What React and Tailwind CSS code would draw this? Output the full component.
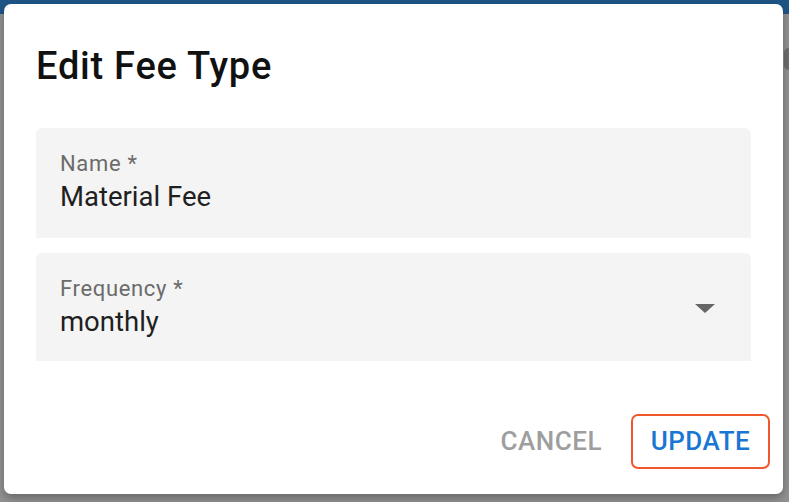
import React from 'react';

const font = { fontFamily: 'Roboto, "Liberation Sans", sans-serif' };

const FilledField = ({ label, value, select = false, height }) => (
  <div className={`relative ${height} rounded-t-[6px] bg-[#f4f4f4] pl-[24px] pt-[24px]`}>
    <div className="text-[22px] leading-[24px] tracking-[0.03em] text-[#6b6b6b]">{label}</div>
    <div className="mt-[5px] text-[27.5px] leading-[32px] text-[#1f1f1f]">{value}</div>
    {select && (
      <svg className="absolute right-[34px] top-[48px] h-[14px] w-[24px]" viewBox="0 0 24 14">
        <path d="M2 3 L22 3 L12 12 Z" fill="#666" />
      </svg>
    )}
  </div>
);

export default function App() {
  return (
    <div className="relative h-[502px] w-[789px] overflow-hidden bg-[#929292]" style={font}>
      {/* app bar behind the overlay */}
      <div className="absolute left-0 right-0 top-0 h-[14px] bg-[#1e5586]" />
      <div className="absolute right-0 top-[48px] h-[22px] w-[5px] rounded-l-full bg-[#6e6e6e]" />

      <div className="relative ml-[4px] mt-[4px] flex h-[490px] w-[779px] flex-col rounded-[7px] bg-white px-[32px] shadow-[0_4px_10px_rgba(0,0,0,0.3)]">
        <h1 className="pt-[39px] text-[38px] font-medium leading-[46px] tracking-[0.02em] text-[#111]">Edit Fee Type</h1>

        <div className="mt-[39px] flex flex-col gap-[15px]">
          <FilledField label="Name *" value="Material Fee" height="h-[110px]" />
          <FilledField label="Frequency *" value="monthly" select height="h-[108px]" />
        </div>

        <div className="mt-auto mb-[25px] flex items-center justify-end gap-[29px]">
          <button className="text-[26px] font-medium uppercase tracking-[0.02em] text-[#9e9e9e]">Cancel</button>
          <button className="-mr-[19px] flex h-[55px] w-[139px] items-center justify-center rounded-[7px] border-2 border-[#f0582b] text-[26px] font-medium uppercase tracking-[0.02em] text-[#1976d2]">
            Update
          </button>
        </div>
      </div>
    </div>
  );
}
